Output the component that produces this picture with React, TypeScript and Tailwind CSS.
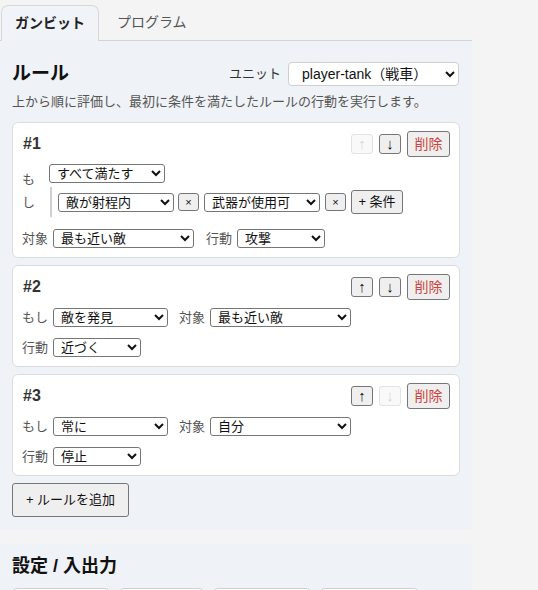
const FONT = "font-['Liberation_Sans','Noto_Sans_CJK_JP',sans-serif]";

const sel = "h-[19px] border border-[#767676] rounded-[3px] bg-white text-[13px] text-[#111] pl-[3px]";
const btn = "border border-[#767676] rounded-[3px] bg-[#efefef] text-[#111] flex items-center justify-center";

function Select({ value, w }: { value: string; w: string }) {
  return (
    <select className={`${sel} ${w}`} defaultValue={value}>
      <option>{value}</option>
    </select>
  );
}

function Field({ label, value, w }: { label: string; value: string; w: string }) {
  return (
    <div className="flex items-center gap-[5px] h-[19px]">
      <span className="text-[13px] text-[#555] leading-[19px]">{label}</span>
      <Select value={value} w={w} />
    </div>
  );
}

function CardHeader({ n, up, down }: { n: number; up: boolean; down: boolean }) {
  const arrow = (on: boolean) =>
    on
      ? "w-[22px] h-[20px] border border-[#767676] rounded-[3px] bg-[#efefef] text-[#111] text-[15px] flex items-center justify-center"
      : "w-[22px] h-[20px] border border-[#e3e3e3] rounded-[3px] bg-[#f9f9f9] text-[#d6d6d6] text-[15px] flex items-center justify-center";
  return (
    <div className="flex items-center justify-between h-[26px]">
      <span className="text-[16px] font-bold text-[#333] pl-px">#{n}</span>
      <div className="flex items-center gap-[6px]">
        <button className={arrow(up)}>↑</button>
        <button className={arrow(down)}>↓</button>
        <button className={`${btn} w-[43px] h-[26px] text-[14px] !text-[#c9463d]`}>削除</button>
      </div>
    </div>
  );
}

export default function App() {
  return (
    <div className={`${FONT} min-h-screen bg-[#f4f4f4] text-[#222]`}>
      <div className="w-[472px]">
        {/* tabs */}
        <div className="flex items-end h-[41px] border-b border-[#d4d4d4] pl-px">
          <div className="w-[98px] h-[36px] -mb-px border border-[#d8d8d8] border-b-0 rounded-t-[7px] bg-[#f0f3f7] flex items-center justify-center text-[14px] font-bold text-[#222]">
            ガンビット
          </div>
          <div className="h-[36px] flex items-center pl-[18px] text-[14px] text-[#555]">プログラム</div>
        </div>

        {/* rules */}
        <div className="bg-[#eff2f6] px-3 pt-[21px] pb-[13px]">
          <div className="flex items-center justify-between pr-[1px]">
            <h2 className="text-[19px] font-bold text-[#111] leading-[24px]">ルール</h2>
            <div className="flex items-center gap-[7px]">
              <span className="text-[13px] text-[#333]">ユニット</span>
              <select
                className="w-[171px] h-[24px] border border-[#cfcfcf] rounded-[4px] bg-white text-[14px] text-[#111] pl-[9px]"
                defaultValue="a"
              >
                <option value="a">player-tank（戦車）</option>
              </select>
            </div>
          </div>
          <p className="mt-[6px] text-[13px] text-[#555] leading-[20px]">
            上から順に評価し、最初に条件を満たしたルールの行動を実行します。
          </p>

          <div className="mt-[10px] flex flex-col gap-[7px]">
            {/* card 1 */}
            <div className="bg-white border border-[#dcdcdc] rounded-[6px] px-[9px] pt-[8px] pb-[9px]">
              <CardHeader n={1} up={false} down={true} />
              <div className="mt-[7px] flex flex-col gap-[12px]">
                <div className="flex items-center">
                  <span className="w-[13px] text-[13px] text-[#555] leading-[23px] break-all">もし</span>
                  <div className="ml-[14px] flex flex-col gap-[4px]">
                    <Select value="すべて満たす" w="w-[116px]" />
                    <div className="flex items-center ml-px border-l-2 border-[#d0d0d0] pl-[6px] py-[3px]">
                      <Select value="敵が射程内" w="w-[116px]" />
                      <button className={`${btn} ml-[4px] w-[21px] h-[18px] text-[11px]`}>×</button>
                      <div className="ml-[5px] flex">
                        <Select value="武器が使用可" w="w-[116px]" />
                      </div>
                      <button className={`${btn} ml-[5px] w-[21px] h-[18px] text-[11px]`}>×</button>
                      <button className={`${btn} ml-[5px] w-[52px] h-[24px] text-[13px]`}>+ 条件</button>
                    </div>
                  </div>
                </div>
                <div className="flex flex-wrap items-center gap-x-[12px] gap-y-[12px]">
                  <Field label="対象" value="最も近い敵" w="w-[141px]" />
                  <Field label="行動" value="攻撃" w="w-[88px]" />
                </div>
              </div>
            </div>

            {/* card 2 */}
            <div className="bg-white border border-[#dcdcdc] rounded-[6px] px-[9px] pt-[8px] pb-[9px]">
              <CardHeader n={2} up={true} down={true} />
              <div className="mt-[8px] flex flex-wrap items-center gap-x-[11px] gap-y-[11px]">
                <Field label="もし" value="敵を発見" w="w-[115px]" />
                <Field label="対象" value="最も近い敵" w="w-[141px]" />
                <Field label="行動" value="近づく" w="w-[88px]" />
              </div>
            </div>

            {/* card 3 */}
            <div className="bg-white border border-[#dcdcdc] rounded-[6px] px-[9px] pt-[8px] pb-[9px]">
              <CardHeader n={3} up={true} down={false} />
              <div className="mt-[8px] flex flex-wrap items-center gap-x-[11px] gap-y-[11px]">
                <Field label="もし" value="常に" w="w-[115px]" />
                <Field label="対象" value="自分" w="w-[141px]" />
                <Field label="行動" value="停止" w="w-[88px]" />
              </div>
            </div>
          </div>

          <button className={`${btn} mt-[7px] w-[117px] h-[34px] text-[13px]`}>+ ルールを追加</button>
        </div>

        {/* settings */}
        <div className="mt-[14px] bg-[#eff2f6] px-3 pt-[10px] pb-4">
          <h2 className="text-[18px] font-bold text-[#111] leading-[24px]">設定 / 入出力</h2>
          <div className="mt-[10px] flex gap-[9px]">
            <button className="w-[98px] h-[30px] bg-white border border-[#cfcfcf] rounded-[5px]" aria-label="保存" />
            <button className="w-[85px] h-[30px] bg-white border border-[#cfcfcf] rounded-[5px]" aria-label="読込" />
            <button className="w-[98px] h-[30px] bg-white border border-[#cfcfcf] rounded-[5px]" aria-label="書き出し" />
            <button className="w-[99px] h-[30px] bg-white border border-[#cfcfcf] rounded-[5px]" aria-label="取り込み" />
          </div>
        </div>
      </div>
    </div>
  );
}
